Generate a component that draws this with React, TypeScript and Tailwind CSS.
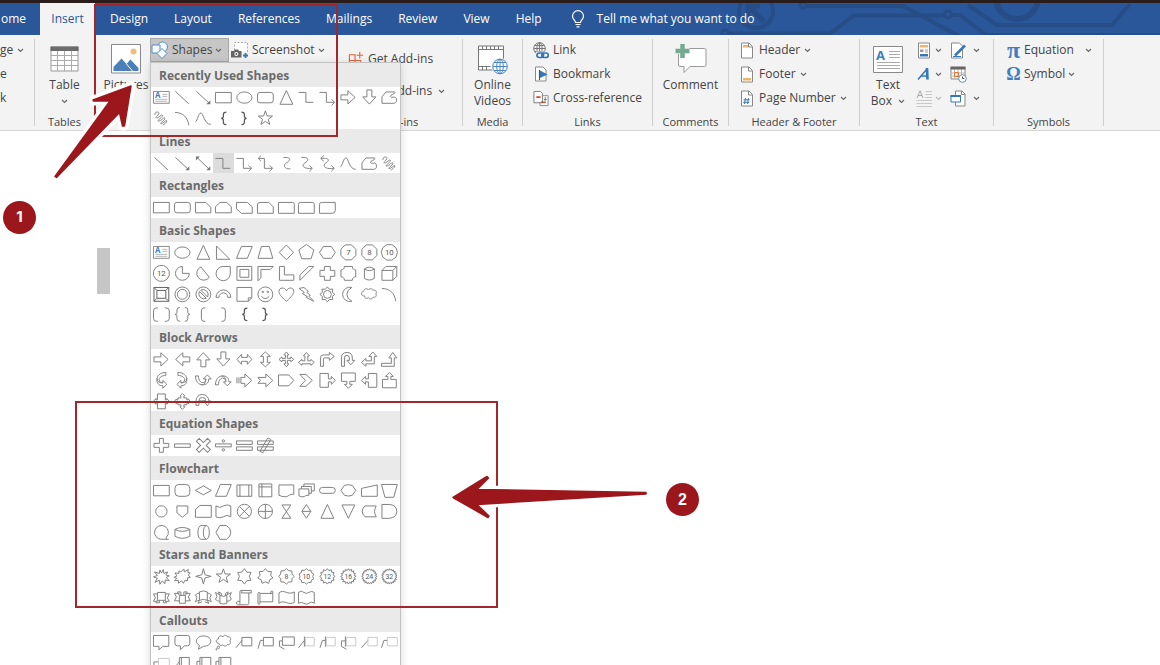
import type { ReactNode } from "react";

const pt = (x: number, y: number) => `${x.toFixed(2)} ${y.toFixed(2)}`;

function star(n: number, outer: number, inner: number, cy = 10.5) {
  const points: string[] = [];
  for (let i = 0; i < n * 2; i++) {
    const r = i % 2 ? inner : outer;
    const a = (Math.PI * i) / n - Math.PI / 2;
    points.push(pt(10.5 + r * Math.cos(a), cy + r * Math.sin(a)));
  }
  return `M${points.join("L")}Z`;
}

function polygon(n: number, r: number, turn = 0) {
  const points: string[] = [];
  for (let i = 0; i < n; i++) {
    const a = (2 * Math.PI * (i + turn)) / n - Math.PI / 2;
    points.push(pt(10.5 + r * Math.cos(a), 10.5 + r * Math.sin(a)));
  }
  return `M${points.join("L")}Z`;
}

const p = (d: string) => <path d={d} />;
const turned = (deg: number, d: string) => <path d={d} transform={`rotate(${deg} 10.5 10.5)`} />;
const faded = (solid: string, faint: string) => (
  <>
    <path d={solid} />
    <path d={faint} stroke="#c9c9c9" />
  </>
);
const numbered = (n: string, d: string, size = 8) => (
  <>
    <path d={d} />
    <text x="10.5" y={10.5 + size * 0.36} fontSize={size} textAnchor="middle" fill="#555" stroke="none" className="font-['Roboto',sans-serif]">
      {n}
    </text>
  </>
);

const ARROW = "M3 8h7V3.8L17.3 10.5L10 17.2V13H3z";
const LBRACE = "M13.5 4.2q-3 0-3 2.2v2q0 2-2.2 2.1q2.2.1 2.2 2.1v2q0 2.2 3 2.2";
const CORNER = "M3.5 17.5V9q0-3 3-3h6V3.5l5 4-5 4V9H7.5q-1 0-1 1v7.5z";
const BEND = "M2.5 14.5h10V9H10l4-5.5L18 9h-2.500v8.500h-13z";
const CALLOUT_ARROW = "M3 3.500h8.500v5.500h3V6.500l4 4-4 4v-2.500h-3v5.500H3z";
const CURVED = "M2.500 6c0 5.500 3 9 7.500 9s6-3 6-6h2.500L14.500 5l-4 4h2.500c0 2-1 3.500-3 3.800S5.500 10.500 5.500 6zM8.500 15c3 0 4.500-2 4.500-6";
const UTURN = "M3.500 17.500V9q0-5.500 5.500-5.500T14.500 9v2.500H17l-4 4.500-4-4.500h2.500V9q0-2.500-2.500-2.500T6.500 9v8.500z";
const BANNER = "M6.500 14.500h-4l2-3.500-2-4h4M14.500 14.500h4l-2-3.500 2-4h-4M6.500 5.500h8v8h-8zM6.500 13.500l-1.500 2.500h3.500v-2.500M14.500 13.500l1.500 2.500h-3.500v-2.500";
const RIBBON = "M7.500 6.500h-5l2 3.500-2 4h5M13.500 6.500h5l-2 3.500 2 4h-5M7.500 8.500h6v8h-6zM7.500 8.500l-2-3.500h3.500v3.500M13.500 8.500l2-3.500h-3.500v3.500";

const shapes: Record<string, ReactNode> = {
  "Text Box": (
    <>
      <path d="M2.500 4.500h16v12h-16z" stroke="#8a8a8a" />
      <path d="M11.500 7.500h5M11.500 9.500h5M4.500 12.500h12M4.500 14.500h12" stroke="#b5b5b5" />
      <text x="4" y="11.500" fontSize="8" fontWeight="700" fill="#3c7fc0" stroke="none">A</text>
    </>
  ),
  Line: p("M3.500 4.500L17 17"),
  "Line Arrow": (
    <>
      <path d="M3.500 4.500L17 17" />
      <path d="M17.500 17.500v-4l-4 4z" fill="#777" stroke="none" />
    </>
  ),
  "Double Arrow": (
    <>
      <path d="M3.500 4L17 17" />
      <path d="M17.500 17.500v-4l-4 4zM3 3.500v4l4-4z" fill="#777" stroke="none" />
    </>
  ),
  Rectangle: p("M2.500 5.500h16v10.500h-16z"),
  Oval: <ellipse cx="10.500" cy="10.700" rx="7.700" ry="5.700" />,
  Rounded: <rect x="2.500" y="5.500" width="16" height="10.500" rx="2.500" />,
  Triangle: p("M10.500 3.500L17 17.500H4z"),
  Elbow: p("M2.500 5.500h7.500v10h7.500"),
  "Elbow Arrow": p("M2.500 5.500h7v10h8M14.800 12.500l3 3-3 3"),
  "Elbow Double Arrow": p("M3.500 5.500h6v10h8M14.800 12.500l3 3-3 3M6 2.800L3.200 5.500 6 8.200"),
  "Curved Line": p("M7.500 4.500c10-.5 6 4 3 5.500s-3 6.500 4 6"),
  "Curved Arrow": p("M5.500 4.500c9-.5 7 3.500 3.500 5.500s-2.500 6.500 7 5.500M13.500 12.500l3 3-3 3"),
  "Curved Double Arrow": p("M4 5.500c10-1 8 3 5 4.500s-3 7 8 5.500M14.500 12.500l3 3-3 3M7 2.500L3.800 5.500 7 8.500"),
  Right: p(ARROW),
  Left: turned(180, ARROW),
  Up: turned(270, ARROW),
  Down: turned(90, ARROW),
  Freeform: p("M3 16.500V10l4-5h8.500q1 0 .5 1c-.5 1.500-4.500 1.500-4.500 3.500q.5 1.500 3 .8c4-1 4.500 6.200.5 6.200z"),
  Scribble: p("M4 7C3 4 8.500 3 8 5.500S3.500 9.500 5.500 10 11 5.500 11.500 7.500 5.500 12.500 7.500 13.200 14 8 14 10.500 8.500 15 10 15.800 15.500 11.500 16 13 12.500 17 12 17.500"),
  Arc: p("M3 4.500c8 0 13 5 14 13"),
  Curve: p("M2.500 14c2-1 3-9 5.500-9s3.500 12 10 11.500"),
  "Left Brace": <path d={LBRACE} stroke="#555" strokeWidth="1.200" />,
  "Right Brace": <path d={LBRACE} transform="translate(21 0) scale(-1 1)" stroke="#555" strokeWidth="1.200" />,
  "5-Point Star": p(star(5, 7.6, 3)),
  "Snip One": p("M2.500 5.500h10.500l5 5v5.500h-15.500z"),
  "Snip Two": p("M7 5.500h7l4.500 4.500v6h-16v-6z"),
  "Snip Diagonal": p("M2.500 5.500h11l5 4.500v6.500h-11l-5-4.500z"),
  "Snip and Round": p("M5 5.500h9l4.500 4.500v6.500h-16v-8.500q0-2.500 2.500-2.500"),
  "Round One": p("M2.500 5.500h14q2 0 2 2v9h-16z"),
  "Round Two": p("M4.500 5.500h12q2 0 2 2v9h-16v-9q0-2 2-2z"),
  "Round Diagonal": p("M4.500 5.500h14v8q0 3-3 3h-13v-9q0-2 2-2z"),
  "Right Triangle": p("M3.500 4v13.500H17z"),
  Parallelogram: p("M7.500 4.500h11l-5 12h-11z"),
  Trapezoid: p("M6.500 4.500h8l3.500 12H3z"),
  Diamond: p("M10.500 3l7.200 7.500-7.200 7.500L3.300 10.500z"),
  Pentagon: p(polygon(5, 8)),
  Hexagon: p("M6.500 4.500h8l4 6-4 6h-8l-4-6z"),
  Heptagon: numbered("7", polygon(8, 8.2, 0.5)),
  Octagon: numbered("8", polygon(8, 8.2, 0.5)),
  Decagon: numbered("10", polygon(10, 8.2, 0.5)),
  Dodecagon: numbered("12", polygon(12, 8.2, 0.5)),
  Pie: p("M10.500 3.500a7 7 0 1 0 7 7h-7z"),
  Chord: p("M8 4a7 7 0 1 0 8.500 10.500z"),
  Teardrop: p("M17.500 3.500v7a7.200 7.200 0 1 1-7.200-7z"),
  Frame: p("M3 3.500h15v14h-15zM6 6.500h9v8h-9z"),
  "Half Frame": p("M3 3.500h15.500l-3 3h-9.500v8.500l-3 3z"),
  "L-Shape": p("M3.500 3.500h5v8.500h9.500v5.500h-14.500z"),
  "Diagonal Stripe": p("M13 3.500h5L4 17.500v-5.500z"),
  Cross: p("M7.500 3.500h6v4h4.500v6h-4.500v4h-6v-4h-4.500v-6h4.500z"),
  Plaque: p("M6.500 3.500h8c0 2.500 1.500 3.500 3.500 3.500v7c-2 0-3.500 1-3.500 3.500h-8c0-2.500-1.500-3.500-3.500-3.500v-7c2 0 3.500-1 3.500-3.500z"),
  Can: p("M5.500 6v9.500q5 3.500 10 0V6M5.500 6q5-3.500 10 0q-5 3.500-10 0z"),
  Cube: p("M3 7.500l4-4h11v10l-4 4h-11zM3 7.500h11v10M14 7.500l4-4"),
  Bevel: (
    <path d="M3 3.500h15v14h-15zM6 6.500h9v8h-9zM3 3.500l3 3M18 3.500l-3 3M3 17.500l3-3M18 17.500l-3-3" stroke="#5f5f5f" />
  ),
  Donut: (
    <>
      <circle cx="10.500" cy="10.500" r="7.500" />
      <circle cx="10.500" cy="10.500" r="5" />
    </>
  ),
  "No Symbol": (
    <>
      <circle cx="10.500" cy="10.500" r="7.500" />
      <path d="M6.500 7.500l7 7a5.200 5.200 0 0 1-7-7zM7.800 6.200l7 7a5.200 5.200 0 0 0-7-7z" />
    </>
  ),
  "Block Arc": p("M3 13.500a7.500 7.500 0 0 1 15 0h-3a4.500 4.500 0 0 0-9 0z"),
  "Folded Corner": p("M3 3.500h15v10.500l-3.500 3.500h-11.500zM14.500 17.500v-3.500h3.500"),
  Smiley: (
    <>
      <circle cx="10.500" cy="10.500" r="7.500" />
      <path d="M6.500 12.500q4 4.500 8 0" />
      <circle cx="8" cy="8" r=".8" />
      <circle cx="13" cy="8" r=".8" />
    </>
  ),
  Heart: p("M10.500 17.500C5 12.500 3 10 3 7.500C3 3 9 3 10.500 7C12 3 18 3 18 7.500C18 10 16 12.500 10.500 17.500z"),
  Lightning: p("M8 3.500l4.500 4-1.500 1 3.500 3-1.500.8 5 5.200-8-4 1.500-.8-5-3 2-1.200-5.500-4z"),
  Sun: (
    <>
      <path d={star(8, 7.600, 5.500)} />
      <circle cx="10.500" cy="10.500" r="4" />
    </>
  ),
  Moon: p("M14 3.500a7.300 7.300 0 1 0 0 14q-5-2.500-5-7t5-7z"),
  Cloud: p("M5.500 12c-3.500.5-4-4-.8-4.500C5 4.500 8.500 4 9.500 6c1.500-2 4-1.500 4.500.3c3-.8 4.500 2 3 3.700c1.500 2.500-1 4-2.800 3.300c-.8 2.500-3.700 2.300-4.500.5c-2 1.500-4.200.5-4.200-1.800z"),
  "Double Bracket": p("M7 4h-1.500q-3 0-3 3v7.500q0 3 3 3h1.500M14 4h1.500q3 0 3 3v7.500q0 3-3 3h-1.500"),
  "Double Brace": p("M8 3.500q-3 0-3 2.500v2.500q0 2-2 2q2 0 2 2v2.500q0 2.500 3 2.500M13 3.500q3 0 3 2.500v2.500q0 2 2 2q-2 0-2 2v2.500q0 2.500-3 2.500"),
  "Left Bracket": p("M12.500 4h-1.500q-2.500 0-2.500 3v7.500q0 3 2.500 3h1.500"),
  "Right Bracket": p("M8.500 4h1.500q2.500 0 2.500 3v7.500q0 3-2.500 3h-1.500"),
  "Left-Right": p("M3 10.500l4.500-5v3h6v-3l4.500 5-4.500 5v-3h-6v3z"),
  "Up-Down": turned(90, "M3 10.500l4.500-5v3h6v-3l4.500 5-4.500 5v-3h-6v3z"),
  Quad: p("M10.500 3l2.500 3h-1.500v3.500H15V8l3 2.500-3 2.500v-1.500h-3.500V15H13l-2.500 3L8 15h1.500v-3.500H6V13l-3-2.500L6 8v1.500h3.500V6H8z"),
  "Left-Right-Up": p("M10.500 3.500l3 3.500h-1.500v5h3v-1.500l3.500 3-3.500 3v-1.500h-9v1.500l-3.500-3 3.500-3v1.500h3v-5h-1.500z"),
  Bent: p(CORNER),
  "U-Turn": p(UTURN),
  "Left-Up": p("M2.500 13.500l4.500-4v2.500h5.500V7.500H10l4-4.500 4 4.500h-2.500v7.500H7v2.500z"),
  "Bent-Up": p(BEND),
  "Curved Right": turned(90, CURVED),
  "Curved Left": <path d={CURVED} transform="translate(21 0) scale(-1 1) rotate(90 10.500 10.500)" />,
  "Curved Up": p(CURVED),
  "Curved Down": <path d={CURVED} transform="translate(0 21) scale(1 -1)" />,
  "Striped Right": p("M3 7.500v6M5 7.500v6M7 7.500h4V4l7 6.500-7 6.500v-3.500h-4z"),
  "Notched Right": p("M3 7.500h8V4l7 6.500-7 6.500v-3.500h-8l2.500-3z"),
  "Pentagon Arrow": p("M2.500 5h10.500l5 5.500-5 5.500h-10.500z"),
  Chevron: p("M4 4.500h6l6.500 6-6.500 6h-6l5.500-6z"),
  "Right Callout": p(CALLOUT_ARROW),
  "Down Callout": turned(90, CALLOUT_ARROW),
  "Left Callout": turned(180, CALLOUT_ARROW),
  "Up Callout": turned(270, CALLOUT_ARROW),
  "Left-Right Callout": p("M6.500 3h8v6h1.500V7.500l2.500 3-2.500 3V12h-1.500v6h-8v-6H5v1.500l-2.500-3 2.500-3V9h1.500z"),
  "Quad Callout": p("M10.500 2.500L13 5h-1v2h3v2h1.500V8l2 2.500-2 2.500v-1H15v2h-3v2h1l-2.500 2.500L8 16h1v-2H6v-2H4.500v1l-2-2.500 2-2.500v1H6V7h3V5H8z"),
  Circular: p("M3 14.500V10a6.500 6.500 0 0 1 13 0h2l-3.500 5-3.500-5h2a3.300 3.300 0 0 0-7 0v4.500zM6 10h6"),
  Plus: p("M8.500 3.500h4v5h5.500v4h-5.500v5h-4v-5H3v-4h5.500z"),
  Minus: p("M2.500 9h16v3.500h-16z"),
  Multiply: turned(45, "M8.500 2.500h4v6h6v4h-6v6h-4v-6h-6v-4h6z"),
  Divide: (
    <>
      <path d="M2.500 9h16v3h-16z" />
      <circle cx="10.500" cy="6" r="1.200" />
      <circle cx="10.500" cy="15" r="1.200" />
    </>
  ),
  Equal: p("M2.500 6h16v3.500h-16zM2.500 12h16v3.500h-16z"),
  "Not Equal": p("M2.500 6h16v3.500h-16zM2.500 12h16v3.500h-16zM13 3l3 1.500L8 18l-3-1.500z"),
  "Alternate Process": <rect x="3" y="4.500" width="15" height="12" rx="4" />,
  Decision: p("M10.500 6l8 4.500-8 4.500-8-4.500z"),
  Predefined: p("M3 5h15v11.500h-15zM6 5v11.500M15 5v11.500"),
  "Internal Storage": p("M4 4h13v13h-13zM7 4v13M4 7h13"),
  Document: p("M3 5h15v9.500c-4-1-5 2-8 2.500q-4 0-7-1.500z"),
  Multidocument: p("M3 9h10v6.500c-3-.5-4 1.500-6 1.500q-2 0-4-1zM5.500 9V6.500h10v7H13M8 6.500V4h10.500v7h-3"),
  Terminator: <rect x="2.500" y="7.500" width="16" height="6" rx="3" />,
  Preparation: p("M6.500 5.500q4-1.500 8 0l3.500 5-3.500 5q-4 1.500-8 0l-3.500-5z"),
  "Manual Input": p("M2.500 8.500l16-3.500v11.500h-16z"),
  "Manual Operation": p("M2.500 4.500h16l-3.500 13h-9z"),
  Connector: <circle cx="10.500" cy="10.500" r="5.700" />,
  "Off-page": p("M5 5h11v7l-5.500 4.500-5.500-4.500z"),
  Card: p("M7 4.500h11.500v12h-16v-8z"),
  Tape: p("M3 5q4 3 7.500 0 4-2 7.500 0v11q-4-3-7.500 0-4 2-7.500 0z"),
  Junction: (
    <>
      <circle cx="10.500" cy="10.500" r="7.200" />
      <path d="M5.500 5.500l10 10M15.500 5.500l-10 10" />
    </>
  ),
  Or: (
    <>
      <circle cx="10.500" cy="10.500" r="7.200" />
      <path d="M10.500 3.300v14.400M3.300 10.500h14.400" />
    </>
  ),
  Collate: p("M6 4h9l-9 13.500h9z"),
  Sort: p("M10.500 3.500l4.500 7-4.500 7-4.500-7zM6 10.500h9"),
  Merge: p("M4 4h13l-6.500 13.500z"),
  "Stored Data": p("M6 5h11.500q-3.500 5.500 0 11H6q-5.500-5.500 0-11z"),
  Delay: p("M3 3.500h8q7 1 7 7t-7 7h-8z"),
  "Sequential Tape": p("M18 17.500h-7.500a7 7 0 1 1 5-2v2"),
  "Magnetic Disk": p("M3 7.500v7q7.500 4 15 0v-7M3 7.500q7.500-4 15 0q-7.500 4-15 0z"),
  "Direct Access": p("M8 3.500h5.500q3 1 3 7t-3 7H8q-3-1-3-7t3-7zM13.500 3.500q-3 1-3 7t3 7"),
  Display: p("M7 3.500h6.500q4.500 2.500 4.500 7t-4.500 7H7l-4-7z"),
  "Explosion 1": p("M10.500 7l2-3.500.5 4 4-1.500-2 3 3.500 1-3 1.500 3 3.500-4-1-.5 4-2.500-3-2.500 3.500-.5-4-4.500 2 2.500-4-4-1.500 4-1.500-3-3.500 5 1.500.5-3.500z"),
  "Explosion 2": p("M9 6l3-3 .5 3 4-2.500-.500 3 2.500.5-2 2 2 2.500-3 .5.5 3-3-.5-1.500 3-2-2.500-3 2.500v-3l-4 .5 2.500-2.500-3-1 3-1.500-2-3 4 .5V5z"),
  "4-Point Star": p(star(4, 7.800, 2.300)),
  "6-Point Star": p(star(6, 7.800, 5)),
  "7-Point Star": p(star(7, 7.800, 5.500)),
  "8-Point Star": numbered("8", star(8, 7.800, 6.200), 7),
  "10-Point Star": numbered("10", star(10, 7.800, 6.400), 7),
  "12-Point Star": numbered("12", star(12, 7.800, 6), 7),
  "16-Point Star": numbered("16", star(16, 7.800, 6), 7),
  "24-Point Star": numbered("24", star(20, 7.800, 6.200), 7),
  "32-Point Star": numbered("32", star(22, 7.800, 6.200), 7),
  "Ribbon Up": p(BANNER),
  "Ribbon Down": p(RIBBON),
  "Curved Ribbon Up": p("M6.500 13.500q-2 0-4 1.500l1.500-4-1.500-3q1.500-1.500 4-2M14.500 13.500q2 0 4 1.500l-1.500-4 1.500-3q-1.500-1.500-4-2M6.500 5q4-2 8 0v8.500q-4-2-8 0zM6.500 13.500l-1.500 3 4-1.500M14.500 13.500l1.500 3-4-1.500"),
  "Curved Ribbon Down": p("M7 7.500q-2 0-4.500-2l1.500 4-1.500 3q2 2 4.500 2M14 7.500q2 0 4.500-2l-1.500 4 1.500 3q-2 2-4.500 2M7 8.500q3.500 2 7 0v8q-3.500 1.500-7 0zM7 8.500L5.500 5l3 1.500v2.500M14 8.500L15.500 5l-3 1.500v2.500"),
  "Vertical Scroll": p("M6 14.500V4.500q0-1 1-1h10.500v2.500h-2.500v10.500q0 1.500-1.500 1.500h-10q-1-.5-1-1.800t1-1.700zM6 17.500v-3M7 3.500q1.500 1 .5 2.500h7.500"),
  "Horizontal Scroll": p("M3 6.500q0-1 1-1t1 1v10.500q-1 1-2 0zM5 6.500h13V4.500q-.5-1-2 0v2M18 6.500v8.500h-13"),
  Wave: p("M3 6c5-4.500 9 3 15.500-1v10.500c-6 4-10-3.500-15.500 1z"),
  "Double Wave": p("M2.500 5.500q3-2.500 5.500 0 3 2 5 0 3-2 5.500 0v11q-3-2.500-5.500 0-2.500 2-5 0-2.500-2-5.500 0z"),
  "Rectangle Callout": p("M2.500 3.500h15.500v11h-6l-4 3.500v-3.500h-5.500z"),
  "Rounded Callout": p("M5.500 3.500h10q2.500 0 2.500 2.500v5.500q0 2.500-2.500 2.500h-3l-4 4v-4h-3q-2.500 0-2.500-2.500V6q0-2.500 2.500-2.500z"),
  "Oval Callout": p("M5.500 17.500l1-4C1 11 3 4 10.500 4c10 0 10 10.500 0 10.500z"),
  "Thought Bubble": (
    <>
      <path d="M6 11.500c-3.500 0-3.500-4-.5-4.500c-.5-3 3-4 4.500-2c1-2.500 4-2 4.500 0c3-1 4.500 2 2.500 4c2 2.500-.5 4.500-2.500 3.500c-1 2.500-3.500 2-4.500.5c-2 1.500-4 .5-4-1.500z" />
      <circle cx="5.500" cy="15.500" r="1.200" />
      <circle cx="3.500" cy="17.500" r=".6" />
    </>
  ),
  "Line Callout 1": p("M8 5.500h10v8.500h-10zM8 8.500l-6 7.500"),
  "Line Callout 2": p("M8.500 5.500h10v8.500h-10zM8.500 8.500h-3l-2.500 8.500"),
  "Line Callout 3": p("M6.500 5h12v8.500h-12zM6.500 9h-3v5.500l5 3"),
  "Accent Callout 1": faded("M8.500 4.500v10.500M8.500 8.500l-6 7.500", "M9.500 5.500h9v8.500h-9z"),
  "Accent Callout 2": faded("M8.500 4.500v10.500M8.500 8.500h-3l-2.500 7.500", "M9.500 5.500h9v8.500h-9z"),
  "Accent Callout 3": faded("M7.500 4.500v10.500M7.500 9h-4v5.500l5 3", "M8.500 5.500h9.500v8.500h-9.500z"),
  "Plain Callout 1": faded("M9 8.500l-6.500 7.500", "M9 5.500h9.500v8.500h-9.500z"),
  "Plain Callout 2": faded("M8.500 8.500h-3.500l-2.500 7.500", "M8.500 5.500h10v8.500h-10z"),
  "Plain Callout 3": faded("M7 9h-4v5.500l5 3", "M7.500 5.500h11v8.500h-11z"),
  "Bar Callout 1": p("M7.500 4.500h10v9.500h-10zM9.500 4.500v9.500M7.500 8.500l-5.500 7.500"),
  "Bar Callout 2": p("M7 4.500h11v9.500h-11zM9 4.500v9.500M7 8.500h-3v7.500"),
  "Bar Callout 3": p("M6 4.500h12v9.500h-12zM8 4.500v9.500M6 8.500h-3v5.500l5 3"),
};

const sections: { title: string; items: string[]; selected?: number }[] = [
  {
    title: "Recently Used Shapes",
    items: ["Text Box", "Line", "Line Arrow", "Rectangle", "Oval", "Rounded", "Triangle", "Elbow", "Elbow Arrow", "Right", "Down", "Freeform", "Scribble", "Arc", "Curve", "Left Brace", "Right Brace", "5-Point Star"],
  },
  {
    title: "Lines",
    selected: 3,
    items: ["Line", "Line Arrow", "Double Arrow", "Elbow", "Elbow Arrow", "Elbow Double Arrow", "Curved Line", "Curved Arrow", "Curved Double Arrow", "Curve", "Freeform", "Scribble"],
  },
  {
    title: "Rectangles",
    items: ["Rectangle", "Rounded", "Snip One", "Snip Two", "Snip Diagonal", "Snip and Round", "Round One", "Round Two", "Round Diagonal"],
  },
  {
    title: "Basic Shapes",
    items: ["Text Box", "Oval", "Triangle", "Right Triangle", "Parallelogram", "Trapezoid", "Diamond", "Pentagon", "Hexagon", "Heptagon", "Octagon", "Decagon", "Dodecagon", "Pie", "Chord", "Teardrop", "Frame", "Half Frame", "L-Shape", "Diagonal Stripe", "Cross", "Plaque", "Can", "Cube", "Bevel", "Donut", "No Symbol", "Block Arc", "Folded Corner", "Smiley", "Heart", "Lightning", "Sun", "Moon", "Cloud", "Arc", "Double Bracket", "Double Brace", "Left Bracket", "Right Bracket", "Left Brace", "Right Brace"],
  },
  {
    title: "Block Arrows",
    items: ["Right", "Left", "Up", "Down", "Left-Right", "Up-Down", "Quad", "Left-Right-Up", "Bent", "U-Turn", "Left-Up", "Bent-Up", "Curved Right", "Curved Left", "Curved Up", "Curved Down", "Striped Right", "Notched Right", "Pentagon Arrow", "Chevron", "Right Callout", "Down Callout", "Left Callout", "Up Callout", "Left-Right Callout", "Quad Callout", "Circular"],
  },
  { title: "Equation Shapes", items: ["Plus", "Minus", "Multiply", "Divide", "Equal", "Not Equal"] },
  {
    title: "Flowchart",
    items: ["Rectangle", "Alternate Process", "Decision", "Parallelogram", "Predefined", "Internal Storage", "Document", "Multidocument", "Terminator", "Preparation", "Manual Input", "Manual Operation", "Connector", "Off-page", "Card", "Tape", "Junction", "Or", "Collate", "Sort", "Triangle", "Merge", "Stored Data", "Delay", "Sequential Tape", "Magnetic Disk", "Direct Access", "Display"],
  },
  {
    title: "Stars and Banners",
    items: ["Explosion 1", "Explosion 2", "4-Point Star", "5-Point Star", "6-Point Star", "7-Point Star", "8-Point Star", "10-Point Star", "12-Point Star", "16-Point Star", "24-Point Star", "32-Point Star", "Ribbon Up", "Ribbon Down", "Curved Ribbon Up", "Curved Ribbon Down", "Vertical Scroll", "Horizontal Scroll", "Wave", "Double Wave"],
  },
  {
    title: "Callouts",
    items: ["Rectangle Callout", "Rounded Callout", "Oval Callout", "Thought Bubble", "Line Callout 1", "Line Callout 2", "Line Callout 3", "Accent Callout 1", "Accent Callout 2", "Accent Callout 3", "Plain Callout 1", "Plain Callout 2", "Plain Callout 3", "Bar Callout 1", "Bar Callout 2", "Bar Callout 3"],
  },
];

function ShapesMenu() {
  return (
    <div className="absolute top-full left-0 z-20 w-[251px] border border-[#c3c3c3] bg-white shadow-[0_2px_8px_rgba(0,0,0,0.15)]">
      {sections.map((section) => (
        <section key={section.title}>
          <h2 className="h-6 bg-[#eaeaea] pl-2 text-xs leading-[26px] font-bold text-[#6b6b6b]">{section.title}</h2>
          <div className="grid grid-cols-12">
            {section.items.map((name, i) => (
              <button
                key={name}
                type="button"
                aria-label={name}
                className={i === section.selected ? "aspect-square bg-[#dcdcdc]" : "aspect-square"}
              >
                <svg viewBox="0 0 21 21" className="block size-full" fill="none" stroke="#808080" strokeWidth="1">
                  {shapes[name]}
                </svg>
              </button>
            ))}
          </div>
        </section>
      ))}
    </div>
  );
}

function Chevron({ faint = false }: { faint?: boolean }) {
  return (
    <svg width="7" height="5" viewBox="0 0 7 5" fill="none" stroke={faint ? "#bbb" : "#666"} strokeWidth="1.100" className="shrink-0">
      <path d="M1 1l2.500 2.500L6 1" />
    </svg>
  );
}

function Separator() {
  return <div className="my-1 w-px shrink-0 bg-[#cfcfcf]" />;
}

function Group({ label, className, children }: { label: string; className: string; children: ReactNode }) {
  return (
    <div className={`flex h-[95px] shrink-0 flex-col ${className}`}>
      <div className="flex-1">{children}</div>
      <div className="h-4 text-center text-[11px] leading-4 whitespace-nowrap text-[#444]">{label}</div>
    </div>
  );
}

function BigButton({ icon, first, second }: { icon: ReactNode; first: string; second?: ReactNode }) {
  return (
    <button type="button" className="flex w-full flex-col items-center pt-1.5 leading-4">
      <span className="flex h-9 items-center justify-center">{icon}</span>
      <span>{first}</span>
      <span className="flex h-4 items-center gap-1.5">{second}</span>
    </button>
  );
}

function RowButton({ icon, label, menu = false, className = "h-6 gap-1" }: { icon: ReactNode; label: string; menu?: boolean; className?: string }) {
  return (
    <button type="button" className={`flex items-center whitespace-nowrap ${className}`}>
      <span className="flex w-4 shrink-0 justify-center">{icon}</span>
      <span>{label}</span>
      {menu && <Chevron />}
    </button>
  );
}

function PageIcon({ children }: { children?: ReactNode }) {
  return (
    <svg width="14" height="17" viewBox="0 0 14 17" fill="none" stroke="#888">
      <path d="M1.500 1h7.500l3.500 3.500V16h-11z" fill="#fff" />
      <path d="M8.500 1v4h4" />
      {children}
    </svg>
  );
}

const tableIcon = (
  <svg width="30" height="26" viewBox="0 0 30 26" fill="none">
    <path d="M1 1h27v24H1z" fill="#fff" stroke="#999" />
    <path d="M1 9.500h27M1 14.500h27M1 19.500h27M7.500 5v20M14.500 5v20M21.500 5v20" stroke="#aaa" />
    <path d="M.5.500h28v4.500H.5z" fill="#6b6b6b" />
  </svg>
);

const picturesIcon = (
  <svg width="30" height="30" viewBox="0 0 30 30">
    <path d="M.5.500h29v28.500H.5z" fill="#fff" stroke="#888" />
    <circle cx="22.500" cy="7.500" r="3" fill="#efbe7d" />
    <path d="M2.500 27v-4L10.500 14.500l5 5.500 4-4.500 8 8.500v3z" fill="#4a7fb8" />
    <path d="M15.500 20l6 7" stroke="#fff" />
  </svg>
);

const shapesIcon = (
  <svg width="18" height="18" viewBox="0 0 18 18" fill="#f4f9fd" stroke="#5a8cc0">
    <circle cx="11.500" cy="6" r="5" />
    <path d="M1 4h8v8H1z" />
    <path d="M11 7.500l5 5-5 5-5-5z" />
  </svg>
);

const screenshotIcon = (
  <svg width="18" height="18" viewBox="0 0 18 18">
    <path d="M3.500 9V1.500h13V11" fill="#fff" stroke="#aaa" strokeDasharray="2 1.500" />
    <path d="M0 10h3l1-1.500h3L8 10h2.500v6.500H0z" fill="#666" />
    <circle cx="5.300" cy="13" r="2" fill="#fff" />
    <circle cx="5.300" cy="13" r="1" fill="#666" />
    <path d="M14.500 12v5M12 14.500h5" stroke="#3577b8" strokeWidth="1.800" />
  </svg>
);

const addInsIcon = (
  <svg width="17" height="17" viewBox="0 0 17 17" fill="none" stroke="#e0643c" strokeWidth="1.200">
    <path d="M1.500 3.500h6v12h-6zM1.500 9.500h12v6h-12M7.500 9.500V3.500M12.500.500v7M9 4h7" />
  </svg>
);

const myAddInsIcon = (
  <svg width="16" height="16" viewBox="0 0 16 16" fill="none" stroke="#777">
    <path d="M8 1l6 3.500v7L8 15l-6-3.500v-7z" />
  </svg>
);

const videoIcon = (
  <svg width="31" height="31" viewBox="0 0 31 31" fill="none">
    <path d="M1.500 2h25v24h-25z" fill="#fff" stroke="#777" />
    <path d="M1.500 5.500h25M1.500 22.500h12M5.500 2v3.500M9.500 2v3.500M13.500 2v3.500M17.500 2v3.500M21.500 2v3.500M5.500 22.500V26M9.500 22.500V26" stroke="#777" />
    <circle cx="23" cy="22.500" r="8.500" fill="#f3f3f3" />
    <g stroke="#4a86c4">
      <circle cx="23" cy="22.500" r="7.300" fill="#fff" />
      <ellipse cx="23" cy="22.500" rx="3.300" ry="7.300" />
      <path d="M16 22.500h14M17 18.500h12M17 26.500h12M23 15.500v14" />
    </g>
  </svg>
);

const linkIcon = (
  <svg width="16" height="17" viewBox="0 0 16 17" fill="none">
    <g stroke="#777">
      <circle cx="6.500" cy="6.500" r="5.800" />
      <ellipse cx="6.500" cy="6.500" rx="2.600" ry="5.800" />
      <path d="M.7 6.500h11.600M1.500 3.500h10M1.500 9.500h10M6.500.700v11.600" />
    </g>
    <path d="M3 9.500h13V17H3z" fill="#f3f3f3" />
    <g stroke="#2f73b5" strokeWidth="1.700">
      <rect x="4" y="11" width="6.500" height="4.500" rx="2.200" />
      <rect x="8.800" y="11" width="6.500" height="4.500" rx="2.200" />
    </g>
  </svg>
);

const bookmarkIcon = (
  <svg width="14" height="16" viewBox="0 0 14 16" fill="none">
    <path d="M1.500 1h7.500l3 3v11H1.500z" fill="#fff" stroke="#888" />
    <path d="M6 4.500l7.500 4L6 12z" fill="#3577b8" />
    <path d="M5.500 4v10" stroke="#555" strokeWidth="1.200" />
  </svg>
);

const crossReferenceIcon = (
  <svg width="17" height="17" viewBox="0 0 17 17" fill="none">
    <path d="M7.500 5.500h8.500v10.500H7.500z" fill="#fff" stroke="#888" />
    <path d="M1 1h7l2 2v10H1z" fill="#fff" stroke="#777" />
    <path d="M3.500 7h4.500M8.500 12.500h5" stroke="#d8492a" strokeWidth="1.800" />
    <path d="M13 7v3.500M11.500 9l1.500 1.500L14.500 9" stroke="#666" />
  </svg>
);

const commentIcon = (
  <svg width="34" height="32" viewBox="0 0 34 32">
    <path d="M4.500 5.500h26q1.500 0 1.500 1.500v15q0 1.500-1.500 1.500H16l-6 6v-6H6q-1.500 0-1.500-1.500z" fill="#fff" stroke="#999" />
    <path d="M8.500 1v14M1.500 8h14" stroke="#f3f3f3" strokeWidth="6" />
    <path d="M8.500 1v14M1.500 8h14" stroke="#74aa92" strokeWidth="4.500" />
  </svg>
);

const textBoxIcon = (
  <svg width="30" height="27" viewBox="0 0 30 27">
    <path d="M.5.500h29v26H.5z" fill="#fff" stroke="#888" />
    <path d="M16 5.500h11M16 8.500h11M16 11.500h11M4 16.500h23M4 19.500h23M4 22.500h23" stroke="#aaa" />
    <text x="3" y="14" fontSize="13" fontWeight="700" fill="#3c7fc0">A</text>
  </svg>
);

const quickPartsIcon = (
  <svg width="16" height="17" viewBox="0 0 16 17">
    <path d="M2.500 1h11v15h-11z" fill="#fff" stroke="#888" />
    <path d="M4 3h8v2.500H4z" fill="#ecb565" />
    <path d="M4 7.500h3.500v2.500H4z" fill="#999" />
    <path d="M9 8h3M9 10h3" stroke="#999" />
    <path d="M4 12h8v2.500H4z" fill="#3577b8" />
  </svg>
);

const wordArtIcon = (
  <svg width="16" height="16" viewBox="0 0 16 16" fill="none" stroke="#3577b8">
    <path d="M2 13.500L11.500 2.500" strokeWidth="1.500" />
    <path d="M11 2L11.500 13.500" strokeWidth="2.600" />
    <path d="M5 10h7" strokeWidth="1.500" />
  </svg>
);

const dropCapIcon = (
  <svg width="16" height="17" viewBox="0 0 16 17" fill="none" stroke="#c8c8c8">
    <path d="M9.500 1.500H16M9.500 4.500H16M9.500 7.500H16M.5 10.500H16M.5 13.500H16M.5 16.500H16" />
    <path d="M1 8L4 .8 7 8M2 5.500h4" stroke="#a8a8a8" />
  </svg>
);

const signatureIcon = (
  <svg width="17" height="17" viewBox="0 0 17 17" fill="none">
    <path d="M1.500 1h8l3 3v12h-11z" fill="#fff" stroke="#888" />
    <path d="M5 13.500L15 3.500" stroke="#3577b8" strokeWidth="2.500" />
    <path d="M3 14.500h8" stroke="#3577b8" />
  </svg>
);

const dateIcon = (
  <svg width="17" height="17" viewBox="0 0 17 17" fill="none">
    <path d="M1 1.500h14V13H1z" fill="#fff" stroke="#888" />
    <path d="M1 7h14M1 10h14M4.500 3v10M8 3v10M11.500 3v10" stroke="#b5b5b5" />
    <path d="M.5.500h15v3H.5z" fill="#666" />
    <path d="M4.500 6.500h4v4h-4z" stroke="#e07a3c" />
    <circle cx="12.500" cy="12.500" r="3.800" fill="#fff" stroke="#5a92c8" />
    <path d="M12.500 10.500v2h1.800" stroke="#555" />
  </svg>
);

const objectIcon = (
  <svg width="17" height="17" viewBox="0 0 17 17" fill="none">
    <path d="M5.500 1h6.500l3 3v12H5.500z" fill="#fff" stroke="#888" />
    <path d="M11.500 1v3.500H15" stroke="#888" />
    <path d="M1 5.500h9.500v6.500H1z" fill="#fff" stroke="#3577b8" />
    <path d="M.5 5h10.500v2H.5z" fill="#3577b8" />
  </svg>
);

const hashIcon = (
  <PageIcon>
    <path d="M5.500 8l-1 6M8.500 8l-1 6M3.500 9.800h6M3.200 12.300h6" stroke="#3577b8" />
  </PageIcon>
);

const tabs = ["Design", "Layout", "References", "Mailings", "Review", "View", "Help"];

function TabBar() {
  return (
    <nav className="relative flex h-8 overflow-hidden bg-[#2a579a] text-xs text-white">
      <svg className="absolute top-0 left-[720px]" width="440" height="32" viewBox="720 3 440 32" fill="none" stroke="#264d86" strokeWidth="4">
        <circle cx="756" cy="11" r="17" />
        <path d="M764 22L750 7M748 18V6h12" strokeWidth="5" />
        <circle cx="725" cy="33" r="3" strokeWidth="3" />
        <path d="M729 33.500h101l24-18h90" />
        <circle cx="948" cy="14.500" r="3.500" strokeWidth="3" />
        <path d="M952 15h8l26 20h174" />
        <circle cx="803" cy="5" r="3" strokeWidth="3" />
        <path d="M807 6h96l56 30M968 5l29 20h115l18-21" />
        <circle cx="1017" cy="-2" r="21" strokeWidth="6" />
      </svg>
      <button type="button" className="w-10 shrink-0 pr-3.5 text-right">ome</button>
      <button type="button" className="w-[55px] shrink-0 bg-[#f3f3f3] text-[#2a579a]">Insert</button>
      <div className="flex pl-0.5">
        {tabs.map((tab) => (
          <button key={tab} type="button" className="shrink-0 px-[13px]">{tab}</button>
        ))}
      </div>
      <button type="button" className="flex items-center gap-3 pl-4 whitespace-nowrap">
        <svg width="14" height="18" viewBox="0 0 14 18" fill="none" stroke="#fff" strokeWidth="1.200">
          <path d="M4.500 12.500C4.500 10 1.500 9.500 1.500 6.200a5.500 5.500 0 0 1 11 0C12.500 9.500 9.500 10 9.500 12.500zM4.500 14.500h5M5.500 16.800h3" />
        </svg>
        <span className="relative">Tell me what you want to do</span>
      </button>
    </nav>
  );
}

function Ribbon() {
  return (
    <div className="flex border-b border-[#d6d6d6] bg-[#f3f3f3] text-xs text-[#444]">
      <div className="flex w-[34px] shrink-0 flex-col items-start pt-[3px]">
        <button type="button" className="flex h-6 items-center gap-1 pr-4">ge <Chevron /></button>
        <button type="button" className="h-6">e</button>
        <button type="button" className="h-6">k</button>
      </div>
      <Separator />
      <Group label="Tables" className="w-[59px]">
        <BigButton icon={tableIcon} first="Table" second={<Chevron />} />
      </Group>
      <Separator />
      <Group label="Illustrations" className="w-[241px]">
        <div className="flex">
          <div className="flex w-[55px] justify-end">
            <div className="w-12"><BigButton icon={picturesIcon} first="Pictures" /></div>
          </div>
          <div className="relative mt-[3px] h-6">
            <button type="button" className="flex h-6 w-[79px] items-center gap-[3px] border border-[#a6a6a6] bg-[#c6c6c6]">
              {shapesIcon}
              <span>Shapes</span>
              <Chevron />
            </button>
            <ShapesMenu />
          </div>
          <button type="button" className="mt-[3px] flex h-6 items-center gap-[3px] pl-0.5 whitespace-nowrap">
            {screenshotIcon}
            <span>Screenshot</span>
            <Chevron />
          </button>
        </div>
      </Group>
      <Group label="Add-ins" className="w-[126px]">
        <div className="flex flex-col pt-2 pl-3">
          <RowButton icon={addInsIcon} label="Get Add-ins" className="h-8 gap-1" />
          <RowButton icon={myAddInsIcon} label="My Add-ins" menu className="h-8 gap-1.5" />
        </div>
      </Group>
      <Separator />
      <Group label="Media" className="w-[59px]">
        <BigButton icon={videoIcon} first="Online" second="Videos" />
      </Group>
      <Separator />
      <Group label="Links" className="w-[129px]">
        <div className="flex flex-col pt-[3px] pl-2.5">
          <RowButton icon={linkIcon} label="Link" />
          <RowButton icon={bookmarkIcon} label="Bookmark" />
          <RowButton icon={crossReferenceIcon} label="Cross-reference" />
        </div>
      </Group>
      <Separator />
      <Group label="Comments" className="w-[75px]">
        <BigButton icon={commentIcon} first="Comment" />
      </Group>
      <Separator />
      <Group label="Header & Footer" className="w-[130px]">
        <div className="flex flex-col pt-[3px] pl-2.5">
          <RowButton icon={<PageIcon><path d="M3 3h5v2.500H3z" fill="#ecb565" stroke="none" /></PageIcon>} label="Header" menu />
          <RowButton icon={<PageIcon><path d="M3 12h8v2.500H3z" fill="#ecb565" stroke="none" /></PageIcon>} label="Footer" menu />
          <RowButton icon={hashIcon} label="Page Number" menu />
        </div>
      </Group>
      <Separator />
      <Group label="Text" className="w-[133px]">
        <div className="flex">
          <div className="w-14 shrink-0">
            <BigButton icon={textBoxIcon} first="Text" second={<>Box <Chevron /></>} />
          </div>
          <div className="flex w-[34px] flex-col pt-[3px]">
            <button type="button" aria-label="Quick Parts" className="flex h-6 items-center gap-[3px]">{quickPartsIcon}<Chevron /></button>
            <button type="button" aria-label="WordArt" className="flex h-6 items-center gap-[3px]">{wordArtIcon}<Chevron /></button>
            <button type="button" aria-label="Drop Cap" className="flex h-6 items-center gap-[3px]">{dropCapIcon}<Chevron faint /></button>
          </div>
          <div className="flex flex-col pt-[3px]">
            <button type="button" aria-label="Signature Line" className="flex h-6 items-center gap-1.5">{signatureIcon}<Chevron /></button>
            <button type="button" aria-label="Date and Time" className="flex h-6 items-center">{dateIcon}</button>
            <button type="button" aria-label="Object" className="flex h-6 items-center gap-1.5">{objectIcon}<Chevron /></button>
          </div>
        </div>
      </Group>
      <Separator />
      <Group label="Symbols" className="w-[109px]">
        <div className="flex flex-col pt-[3px] pl-3">
          <button type="button" className="flex h-6 items-center gap-[3px]">
            <span className="w-[15px] text-center font-['Liberation_Serif',serif] text-2xl leading-5 font-bold text-[#3f7fbf]">π</span>
            <span className="w-[58px] text-left">Equation</span>
            <Chevron />
          </button>
          <button type="button" className="flex h-6 items-center gap-[3px]">
            <span className="w-[15px] text-center font-['Liberation_Serif',serif] text-lg leading-6 font-bold text-[#3f7fbf]">Ω</span>
            <span>Symbol</span>
            <Chevron />
          </button>
        </div>
      </Group>
      <Separator />
    </div>
  );
}

function Annotations() {
  return (
    <div className="pointer-events-none absolute inset-0 z-30">
      <div className="absolute top-1 left-[94px] h-[133px] w-[244px] border-2 border-[#a3262b]" />
      <div className="absolute top-[401px] left-[75px] h-[207px] w-[423px] border-2 border-[#a3262b]" />
      <svg className="absolute inset-0" width="700" height="560" viewBox="0 0 700 560" strokeLinejoin="round">
        <g fill="#9b171c">
          <path d="M131.500 85.500L93 99.500L93.500 101.500L109.500 101.500L98 118L120 113L122.500 126.500L124.500 126.500Z" stroke="#fff" strokeWidth="8" />
          <path d="M109.500 101.500L55 176.500L56.500 177.500L120 113Z" stroke="#fff" strokeWidth="8" />
          <path d="M131 86L93 100L93.500 101L110 101L55 176.500L56.500 177.500L119.500 112.500L122.500 126L124.500 126Z" stroke="#9b171c" strokeWidth="1.500" />
          <path d="M453 497.500L487 476.500L488.500 478L477 489.500L646 492.500L646 494L477 504.500L489 516L488 517.500Z" stroke="#fff" strokeWidth="8" />
          <path d="M453 497.500L487 476.500L488.500 478L477 489.500L646 492.500L646 494L477 504.500L489 516L488 517.500Z" stroke="#9b171c" strokeWidth="1.500" />
        </g>
      </svg>
      <div className="absolute top-[201px] left-[3px] flex size-[33px] items-center justify-center rounded-full bg-[#9b171c] font-['Inter','Liberation_Sans',sans-serif] text-[15px] font-bold text-white">1</div>
      <div className="absolute top-[483px] left-[666px] flex size-[33px] items-center justify-center rounded-full bg-[#9b171c] font-['Liberation_Sans',sans-serif] text-base font-bold text-white">2</div>
    </div>
  );
}

export default function App() {
  return (
    <div className="relative h-screen overflow-hidden bg-white font-['Open_Sans','Noto_Sans',sans-serif]">
      <div className="h-[3px] bg-[#2b1c1c]" />
      <TabBar />
      <Ribbon />
      <main className="flex pt-[117px] pl-[97px]">
        <div className="h-[46px] w-[13px] bg-[#c6c6c6]" />
      </main>
      <Annotations />
    </div>
  );
}
